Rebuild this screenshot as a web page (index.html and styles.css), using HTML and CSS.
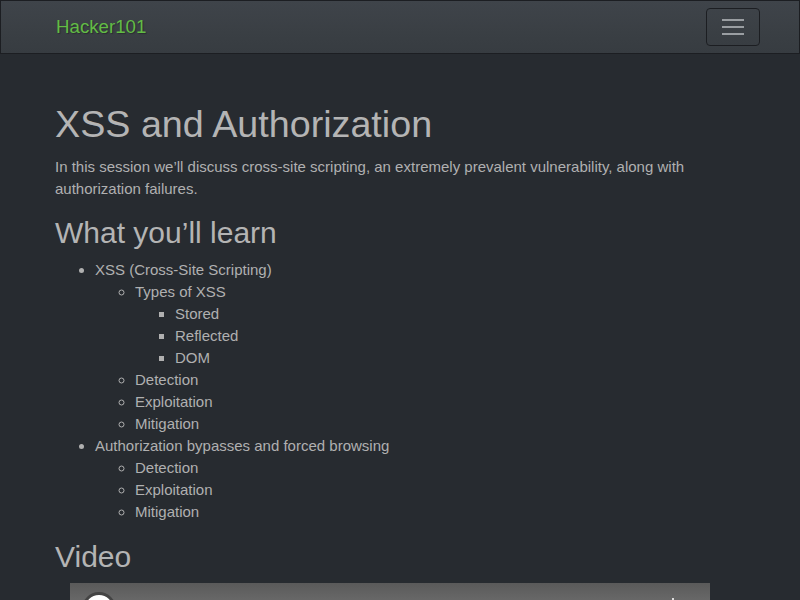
FILE: index.html
```html
<!DOCTYPE html>
<html lang="en">
<head>
<meta charset="utf-8">
<title>Hacker101 - XSS and Authorization</title>
<link rel="stylesheet" href="styles.css">
</head>
<body>
<nav class="navbar">
  <div class="nav-inner">
    <a class="brand" href="#">Hacker101</a>
    <button class="toggler" aria-label="Toggle navigation">
      <span class="bar"></span><span class="bar"></span><span class="bar"></span>
    </button>
  </div>
</nav>
<main class="container">
  <h1>XSS and Authorization</h1>
  <p class="lead">In this session we’ll discuss cross-site scripting, an extremely prevalent vulnerability, along with authorization failures.</p>
  <h2>What you’ll learn</h2>
  <ul class="l1">
    <li>XSS (Cross-Site Scripting)
      <ul class="l2">
        <li>Types of XSS
          <ul class="l3">
            <li>Stored</li>
            <li>Reflected</li>
            <li>DOM</li>
          </ul>
        </li>
        <li>Detection</li>
        <li>Exploitation</li>
        <li>Mitigation</li>
      </ul>
    </li>
    <li>Authorization bypasses and forced browsing
      <ul class="l2">
        <li>Detection</li>
        <li>Exploitation</li>
        <li>Mitigation</li>
      </ul>
    </li>
  </ul>
  <h2 class="video-title">Video</h2>
  <div class="video">
    <div class="video-top">
      <span class="avatar"></span>
      <span class="menu-dot"></span>
    </div>
  </div>
</main>
</body>
</html>
```
FILE: styles.css
```css
html, body {
  margin: 0;
  padding: 0;
}
body {
  background: #272b30;
  color: #b0b0b0;
  font-family: "Liberation Sans", Arial, sans-serif;
  font-size: 15px;
  line-height: 22px;
}
.navbar {
  background: linear-gradient(#3f444a, #3a3f44 60%, #373c41);
  border: 1px solid #1c1e22;
  height: 52px;
}
.nav-inner {
  max-width: 705px;
  margin: 0 auto;
  padding: 0 40px 0 55px;
  height: 52px;
  display: flex;
  align-items: center;
  justify-content: space-between;
}
.brand {
  color: #62bc45;
  font-size: 18.7px;
  text-decoration: none;
  text-shadow: 1px 1px 1px rgba(0,0,0,0.3);
  line-height: 24px;
}
.toggler {
  width: 54px;
  height: 38px;
  margin-right: -1px;
  background: transparent;
  border: 1px solid #1c1e22;
  border-radius: 4px;
  display: flex;
  flex-direction: column;
  align-items: center;
  justify-content: center;
  gap: 5px;
  padding: 0;
}
.toggler .bar {
  display: block;
  width: 22px;
  height: 2px;
  background: #9a9ea2;
}
.container {
  max-width: 690px;
  margin: 0 auto;
  padding: 48px 55px 0 55px;
}
h1 {
  font-size: 37.7px;
  font-weight: 400;
  line-height: 44px;
  margin: 0 0 10px 0;
  color: #b4b4b4;
}
p.lead {
  margin: 0 0 15px 0;
}
h2 {
  font-size: 30px;
  font-weight: 400;
  line-height: 36px;
  margin: 0 0 8px 0;
  color: #b4b4b4;
}
ul {
  margin: 0;
  padding-left: 40px;
}
ul.l1 { list-style: disc; margin-bottom: 16px; }
ul.l2 { list-style: circle; }
ul.l3 { list-style: square; }
.video-title {
  margin-bottom: 8px;
}
.video {
  margin: 0 15px;
  width: 640px;
  height: 360px;
  background: linear-gradient(#5a5a5a, #7a7a7a 40px, #2a2a2a);
  position: relative;
  overflow: hidden;
}
.video-top {
  display: flex;
  align-items: flex-start;
  justify-content: space-between;
  padding: 9px 12px;
}
.avatar {
  width: 34px;
  height: 34px;
  border-radius: 50%;
  background: #fff;
  border: 3px solid #444;
  box-sizing: border-box;
}
.menu-dot {
  width: 2px;
  height: 4px;
  background: #ddd;
  margin-top: 6px;
  margin-right: 24px;
}
```
